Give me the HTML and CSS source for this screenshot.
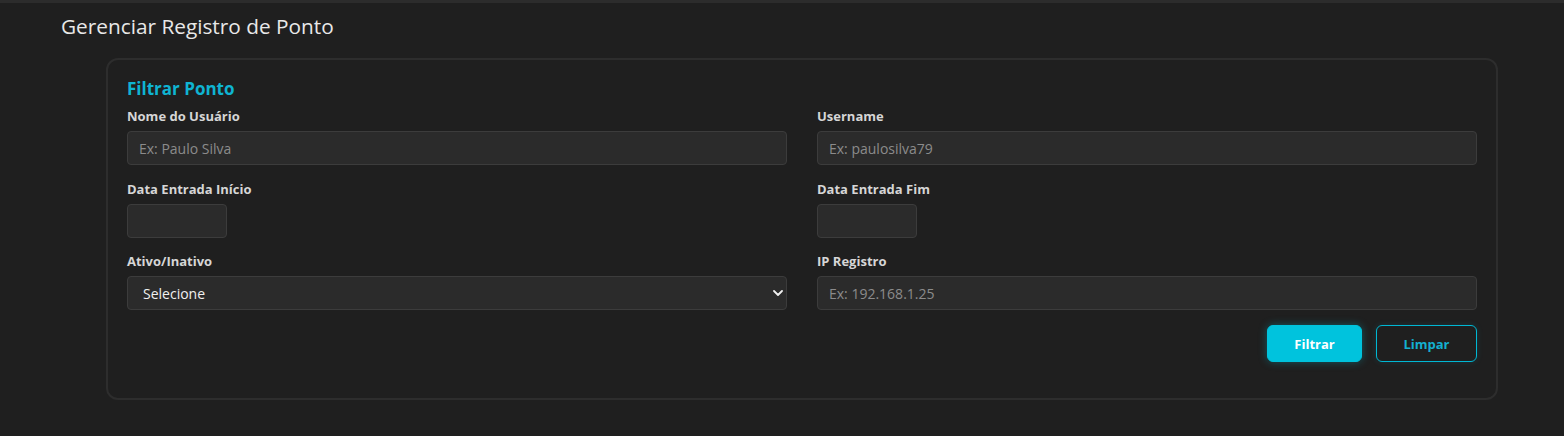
FILE: index.html
```html
<!DOCTYPE html>
<html lang="pt-BR">
<head>
<meta charset="utf-8">
<title>Gerenciar Registro de Ponto</title>
<link rel="stylesheet" href="styles.css">
</head>
<body>
<div class="topbar"></div>
<main class="page">
  <h1 class="page-title">Gerenciar Registro de Ponto</h1>
  <section class="card">
    <h2 class="card-title">Filtrar Ponto</h2>
    <form class="grid">
      <div class="field">
        <label class="label">Nome do Usuário</label>
        <input class="input" type="text" placeholder="Ex: Paulo Silva">
      </div>
      <div class="field">
        <label class="label">Username</label>
        <input class="input" type="text" placeholder="Ex: paulosilva79">
      </div>
      <div class="field">
        <label class="label">Data Entrada Início</label>
        <input class="input date" type="text">
      </div>
      <div class="field">
        <label class="label">Data Entrada Fim</label>
        <input class="input date" type="text">
      </div>
      <div class="field">
        <label class="label">Ativo/Inativo</label>
        <div class="select-wrap">
          <select class="input select">
            <option>Selecione</option>
          </select>
          <svg class="chevron" viewBox="0 0 10 6" width="10" height="6"><path d="M1 1l4 4 4-4" fill="none" stroke="#f0f0f0" stroke-width="1.8" stroke-linecap="round" stroke-linejoin="round"/></svg>
        </div>
      </div>
      <div class="field">
        <label class="label">IP Registro</label>
        <input class="input" type="text" placeholder="Ex: 192.168.1.25">
      </div>
    </form>
    <div class="actions">
      <button class="btn btn-primary" type="button">Filtrar</button>
      <button class="btn btn-outline" type="button">Limpar</button>
    </div>
  </section>
</main>
</body>
</html>
```

FILE: styles.css
```css
* { box-sizing: border-box; }
html, body {
  margin: 0;
  background: #1f1f1f;
  font-family: "Open Sans", "Noto Sans", sans-serif;
  color: #e6e6e6;
}
.topbar {
  height: 3px;
  background: #2c2c2c;
}
.page {
  padding: 0 0 0 61px;
}
.page-title {
  margin: 0;
  padding-top: 9px;
  font-size: 20.8px;
  font-weight: 400;
  line-height: 28px;
  color: #e8e8e8;
}
.card {
  margin: 18px 0 0 45px;
  width: 1392px;
  border: 2px solid #2d2d2d;
  border-radius: 12px;
  padding: 17px 19px 36px;
}
.card-title {
  margin: 0 0 7px;
  font-size: 17px;
  font-weight: 700;
  line-height: 23px;
  color: #0fb4d2;
}
.grid {
  display: grid;
  grid-template-columns: 660px 660px;
  column-gap: 30px;
  row-gap: 14.5px;
  margin: 0;
}
.field {
  display: flex;
  flex-direction: column;
  align-items: flex-start;
}
.label {
  font-size: 13px;
  font-weight: 700;
  line-height: 18px;
  color: #d6d6d6;
  margin-bottom: 6px;
}
.input {
  width: 100%;
  height: 34px;
  background: #2b2b2b;
  border: 1px solid #3c3c3c;
  border-radius: 4px;
  padding: 0 11px;
  font-family: "Open Sans", "Noto Sans", sans-serif;
  font-size: 14px;
  color: #e8e8e8;
  outline: none;
}
.input::placeholder { color: #8b8b8b; }
.date { width: 100px; }
.select-wrap {
  position: relative;
  width: 100%;
}
.select {
  appearance: none;
  -webkit-appearance: none;
  padding-left: 15px;
  color: #f0f0f0;
}
.chevron {
  position: absolute;
  right: 4px;
  top: 14px;
}
.actions {
  display: flex;
  justify-content: flex-end;
  gap: 14px;
  margin-top: 15px;
}
.btn {
  height: 37px;
  border-radius: 6px;
  font-family: "Open Sans", "Noto Sans", sans-serif;
  font-size: 13px;
  font-weight: 700;
  cursor: pointer;
}
.btn-primary {
  width: 95px;
  background: #00c3dd;
  border: 1px solid #00c3dd;
  color: #ffffff;
  box-shadow: 0 0 8px rgba(0, 195, 221, 0.35);
}
.btn-outline {
  width: 101px;
  background: transparent;
  border: 1px solid #00b8d4;
  color: #14b0d0;
  box-shadow: 0 0 6px rgba(0, 184, 212, 0.15);
}
```
